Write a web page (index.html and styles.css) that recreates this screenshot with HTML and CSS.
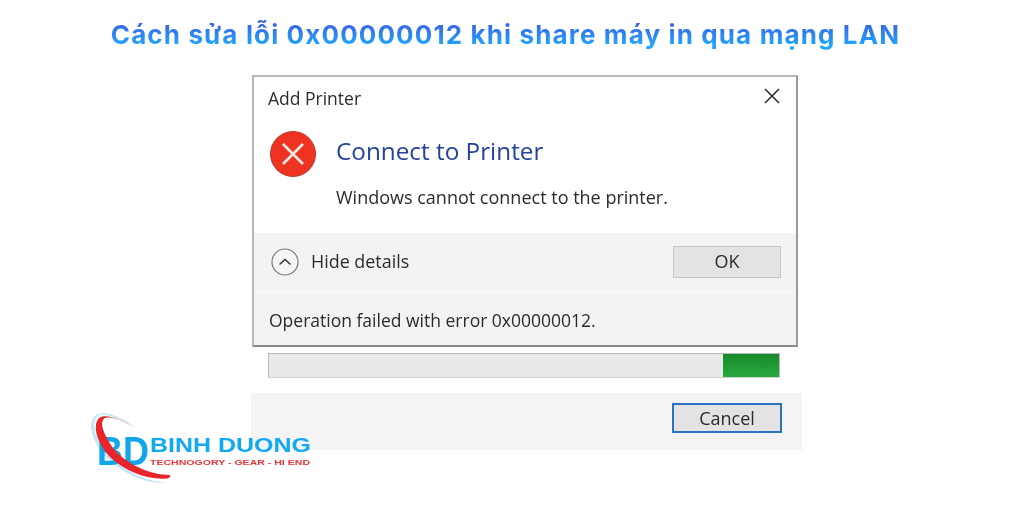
FILE: index.html
```html
<!DOCTYPE html>
<html lang="vi">
<head>
<meta charset="utf-8">
<title>Cách sửa lỗi 0x00000012</title>
<link rel="stylesheet" href="styles.css">
</head>
<body>
<div class="page">
  <h1 class="title">Cách sửa lỗi 0x00000012 khi share máy in qua mạng LAN</h1>
  <div class="shot">
    <section class="dialog">
      <div class="dialog-main">
        <div class="caption">
          <span class="caption-text">Add Printer</span>
          <svg class="close" viewBox="0 0 16 16" width="16" height="16"><path d="M1 1L15 15M15 1L1 15" stroke="#2a2a2a" stroke-width="1.5" fill="none"/></svg>
        </div>
        <div class="message">
          <svg class="error-icon" viewBox="0 0 46 46" width="46" height="46"><circle cx="23" cy="23" r="22.5" fill="#ee3322" stroke="#b8382c"/><path d="M13 13L33 33M33 13L13 33" stroke="#ffe9e4" stroke-width="2.6" fill="none"/></svg>
          <div class="message-text">
            <h2 class="heading">Connect to Printer</h2>
            <p class="desc">Windows cannot connect to the printer.</p>
          </div>
        </div>
      </div>
      <div class="details-row">
        <div class="toggle">
          <svg class="chevron" viewBox="0 0 28 28" width="28" height="28"><circle cx="14" cy="14" r="13" fill="#f6f6f6" stroke="#7a7a7a" stroke-width="1.2"/><path d="M8.5 16.5L14 11.5L19.5 16.5" stroke="#333" stroke-width="1.4" fill="none"/></svg>
          <span>Hide details</span>
        </div>
        <button class="btn btn-ok">OK</button>
      </div>
      <div class="error-row">Operation failed with error 0x00000012.</div>
    </section>
    <div class="under">
      <div class="progress"><div class="progress-fill"></div></div>
    </div>
    <div class="footer">
      <button class="btn btn-cancel">Cancel</button>
    </div>
  </div>
  <svg class="logo" viewBox="0 0 225 80" width="225" height="80">
    <path d="M45 18C32 9 16 3 9 5C1 10 3 26 16 42C34 62 60 74 80 72C60 76 34 65 14 45C-2 25-2 9 8 4C18 1 34 8 45 18Z" fill="#bfe6fa"/>
    <text class="logo-bd" x="7" y="55" textLength="52" lengthAdjust="spacingAndGlyphs">BD</text>
    <path d="M45 18C34 11 22 6 15 8C10 11 11 20 23 38C36 54 60 65 80 65C81 67 79 68 77 68.500C58 70 36 62 20 47C7 33 2 16 9 8C15 3 32 9 45 18Z" fill="#e8252b"/>
    <text class="logo-name" x="60" y="42" textLength="161" lengthAdjust="spacingAndGlyphs">BINH DUONG</text>
    <text class="logo-tag" x="60" y="55" textLength="160" lengthAdjust="spacingAndGlyphs">TECHNOGORY - GEAR - HI END</text>
  </svg>
</div>
</body>
</html>
```

FILE: styles.css
```css
* { box-sizing: border-box; }
html, body { margin: 0; padding: 0; background: #fff; }
.page {
  position: relative;
  width: 1011px;
  height: 505px;
  overflow: hidden;
  background: #fff;
  font-family: "Open Sans", "Noto Sans", sans-serif;
  color: #2b2b2b;
}
.title {
  margin: 0;
  height: 75px;
  padding-top: 18px;
  text-align: center;
  font-family: Inter, "Open Sans", sans-serif;
  font-size: 26px;
  line-height: 34px;
  font-weight: 700;
  letter-spacing: 1.13px;
  filter: blur(0.3px);
  background: linear-gradient(180deg, #3a5fe2 0 22px, #1fa8ff 46px);
  -webkit-background-clip: text;
  background-clip: text;
  -webkit-text-fill-color: transparent;
}
.shot {
  width: 551px;
  height: 375px;
  margin-left: 251px;
  background: linear-gradient(#fff 0 318px, #f4f4f4 318px);
  display: flex;
  flex-direction: column;
  filter: blur(0.45px);
}
.dialog {
  width: 546px;
  height: 272px;
  margin-left: 1px;
  border: 2px solid #b8b8b8;
  border-right-color: #9a9a9a;
  border-bottom-color: #8a8a8a;
  display: flex;
  flex-direction: column;
  background: #f3f3f3;
}
.dialog-main {
  height: 156px;
  background: #fff;
  padding: 0 14px 0 14px;
}
.caption {
  height: 41px;
  display: flex;
  align-items: center;
  justify-content: space-between;
  font-size: 17.500px;
}
.close { margin-right: 2px; margin-top: -3px; }
.message { display: flex; align-items: flex-start; margin-top: 13px; margin-left: 2px; }
.error-icon { flex: none; }
.message-text { margin-left: 20px; }
.heading {
  margin: 0;
  padding-top: 3px;
  font-size: 24.300px;
  line-height: 34px;
  font-weight: 400;
  color: #23439c;
}
.desc {
  margin: 17px 0 0;
  font-size: 18px;
  line-height: 24px;
  color: #2b2b2b;
}
.details-row {
  height: 59px;
  display: flex;
  align-items: center;
  justify-content: space-between;
  padding: 0 15px 0 17px;
  border-bottom: 1px solid #fafafa;
}
.toggle {
  display: flex;
  align-items: center;
  gap: 12px;
  font-size: 17.900px;
  margin-top: -1px;
}
.toggle span { margin-top: -2px; }
.btn {
  font-family: inherit;
  font-size: 18px;
  color: #2b2b2b;
  background: #e3e3e3;
  padding: 0;
}
.btn-ok { width: 108px; height: 32px; border: 1px solid #c6c6c6; margin-top: -1px; padding-bottom: 2px; }
.error-row {
  flex: 1;
  display: flex;
  align-items: center;
  padding-left: 15px;
  padding-top: 3px;
  font-size: 17.500px;
}
.under {
  height: 46px;
  padding: 6px 22px 0 17px;
}
.progress {
  width: 512px;
  height: 25px;
  display: flex;
  justify-content: flex-end;
  background: #e9e9e9;
  border: 1px solid #b9b9b9;
  border-bottom-color: #cfcfcf;
}
.progress-fill {
  width: 56px;
  background: linear-gradient(#178a2b, #28a83e);
}
.footer {
  flex: 1;
  padding: 10px 20px 0 0;
  display: flex;
  justify-content: flex-end;
  align-items: flex-start;
}
.btn-cancel { width: 110px; height: 30px; border: 2px solid #2a72c4; }
.logo { position: absolute; left: 90px; top: 410px; filter: blur(0.4px); }
.logo-bd { font-family: "Liberation Sans", sans-serif; font-weight: 700; font-size: 41px; fill: #12a6ec; }
.logo-name { font-family: "Liberation Sans", sans-serif; font-weight: 700; font-size: 20px; fill: #12a9f0; }
.logo-tag { font-family: "Liberation Sans", sans-serif; font-weight: 700; font-size: 8px; fill: #e8353a; }
```
